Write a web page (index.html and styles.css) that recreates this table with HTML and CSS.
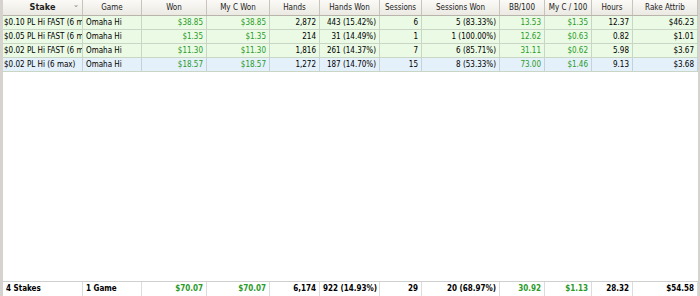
FILE: index.html
```html
<!DOCTYPE html>
<html>
<head>
<meta charset="utf-8">
<link rel="stylesheet" href="styles.css">
</head>
<body>
<div class="grid">
  <div class="row head">
    <div class="c hc stake-h">Stake<span class="sort">&#8964;</span></div>
    <div class="c hc">Game</div>
    <div class="c hc">Won</div>
    <div class="c hc">My C Won</div>
    <div class="c hc">Hands</div>
    <div class="c hc">Hands Won</div>
    <div class="c hc">Sessions</div>
    <div class="c hc">Sessions Won</div>
    <div class="c hc">BB/100</div>
    <div class="c hc">My C / 100</div>
    <div class="c hc">Hours</div>
    <div class="c hc">Rake Attrib</div>
  </div>
  <div class="row data green">
    <div class="c l clip">$0.10 PL Hi FAST (6 max)</div>
    <div class="c l">Omaha Hi</div>
    <div class="c r g">$38.85</div>
    <div class="c r g">$38.85</div>
    <div class="c r">2,872</div>
    <div class="c r">443 (15.42%)</div>
    <div class="c r">6</div>
    <div class="c r">5 (83.33%)</div>
    <div class="c r g">13.53</div>
    <div class="c r g">$1.35</div>
    <div class="c r">12.37</div>
    <div class="c r">$46.23</div>
  </div>
  <div class="row data green">
    <div class="c l clip">$0.05 PL Hi FAST (6 max)</div>
    <div class="c l">Omaha Hi</div>
    <div class="c r g">$1.35</div>
    <div class="c r g">$1.35</div>
    <div class="c r">214</div>
    <div class="c r">31 (14.49%)</div>
    <div class="c r">1</div>
    <div class="c r">1 (100.00%)</div>
    <div class="c r g">12.62</div>
    <div class="c r g">$0.63</div>
    <div class="c r">0.82</div>
    <div class="c r">$1.01</div>
  </div>
  <div class="row data green">
    <div class="c l clip">$0.02 PL Hi FAST (6 max)</div>
    <div class="c l">Omaha Hi</div>
    <div class="c r g">$11.30</div>
    <div class="c r g">$11.30</div>
    <div class="c r">1,816</div>
    <div class="c r">261 (14.37%)</div>
    <div class="c r">7</div>
    <div class="c r">6 (85.71%)</div>
    <div class="c r g">31.11</div>
    <div class="c r g">$0.62</div>
    <div class="c r">5.98</div>
    <div class="c r">$3.67</div>
  </div>
  <div class="row data blue">
    <div class="c l clip">$0.02 PL Hi (6 max)</div>
    <div class="c l">Omaha Hi</div>
    <div class="c r g">$18.57</div>
    <div class="c r g">$18.57</div>
    <div class="c r">1,272</div>
    <div class="c r">187 (14.70%)</div>
    <div class="c r">15</div>
    <div class="c r">8 (53.33%)</div>
    <div class="c r g">73.00</div>
    <div class="c r g">$1.46</div>
    <div class="c r">9.13</div>
    <div class="c r">$3.68</div>
  </div>
  <div class="spacer"></div>
  <div class="row foot">
    <div class="c l">4 Stakes</div>
    <div class="c l">1 Game</div>
    <div class="c r g">$70.07</div>
    <div class="c r g">$70.07</div>
    <div class="c r">6,174</div>
    <div class="c r">922 (14.93%)</div>
    <div class="c r">29</div>
    <div class="c r">20 (68.97%)</div>
    <div class="c r g">30.92</div>
    <div class="c r g">$1.13</div>
    <div class="c r">28.32</div>
    <div class="c r">$54.58</div>
  </div>
</div>
</body>
</html>
```
FILE: styles.css
```css
html, body {
  margin: 0;
  padding: 0;
  background: #ffffff;
}
body {
  width: 700px;
  height: 296px;
  overflow: hidden;
  font-family: "DejaVu Sans Condensed", "DejaVu Sans", Verdana, sans-serif;
  font-stretch: condensed;
  font-size: 8px;
  color: #000;
}
.grid {
  display: flex;
  flex-direction: column;
  height: 296px;
  border-left: 3px solid #d6d3ce;
  border-right: 2px solid #d6d3ce;
  box-sizing: border-box;
  background: #fff;
}
.row {
  display: grid;
  grid-template-columns: 80px 59px 65px 63px 50px 60px 42px 78px 45px 47px 41px 65px;
}
.c {
  white-space: nowrap;
  overflow: hidden;
  border-right: 1px solid #c9d6c6;
  padding: 0 3px;
  box-sizing: border-box;
}
.head {
  height: 16px;
  background: linear-gradient(#fbfaf7, #ebe9e2);
  border-bottom: 1px solid #b8b5ac;
  box-sizing: border-box;
}
.hc {
  text-align: center;
  line-height: 15px;
  color: #222;
  border-right: 1px solid #c7c4bb;
}
.stake-h {
  font-weight: bold;
  font-size: 9px;
  position: relative;
}
.sort {
  position: absolute;
  right: 3px;
  top: -3px;
  font-weight: normal;
  color: #888;
  font-size: 8px;
}
.data {
  height: 14px;
  line-height: 13px;
  border-bottom: 1px solid #c9d6c6;
  box-sizing: border-box;
}
.green { background: #eafae4; }
.blue { background: #e4f0fa; }
.blue .c { border-right-color: #c4d2dc; }
.l { text-align: left; }
.r { text-align: right; }
.clip { padding-right: 0; padding-left: 1px; }
.g { color: #2a9a2a; }
.spacer { flex: 1; }
.foot {
  height: 15px;
  line-height: 14px;
  border-top: 1px solid #cfcfcf;
  font-weight: bold;
  box-sizing: border-box;
}
.foot .c { border-right-color: #dcdcdc; }
```
